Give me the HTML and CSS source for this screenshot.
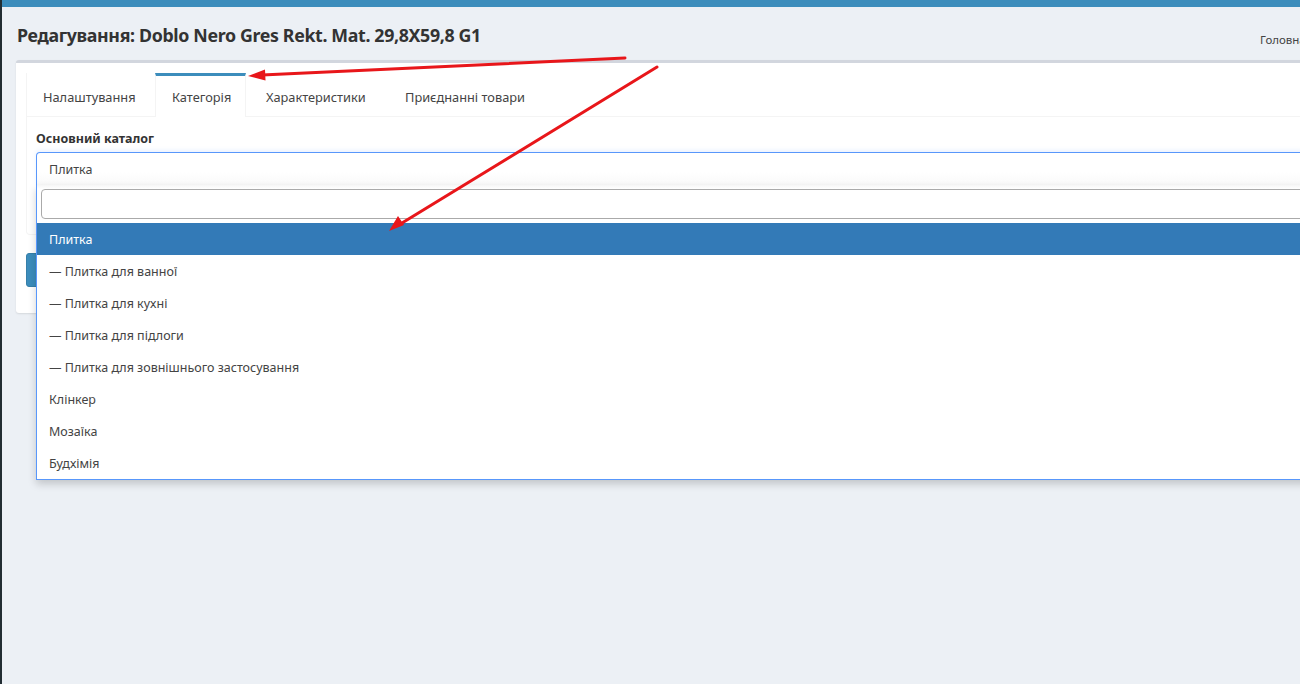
FILE: index.html
```html
<!DOCTYPE html>
<html lang="uk">
<head>
<meta charset="utf-8">
<title>Редагування</title>
<link rel="stylesheet" href="styles.css">
</head>
<body>
<div class="page">
  <div class="topbar"></div>
  <div class="content-wrapper">
    <section class="content-header">
      <h1 class="title">Редагування: Doblo Nero Gres Rekt. Mat. 29,8X59,8 G1</h1>
      <ol class="breadcrumb"><li>Головна</li><li>Товари</li><li>Редагування</li></ol>
    </section>
    <section class="content">
      <div class="box">
        <div class="tabs-custom">
          <ul class="nav-tabs">
            <li class="tab">Налаштування</li>
            <li class="tab active">Категорія</li>
            <li class="tab">Характеристики</li>
            <li class="tab">Приєднанні товари</li>
          </ul>
          <div class="tab-content">
            <label class="form-label">Основний каталог</label>
            <div class="select-wrap">
              <div class="select-box">Плитка</div>
              <div class="dropdown">
                <div class="search-row"><div class="search-input"></div></div>
                <ul class="options">
                  <li class="option highlighted">Плитка</li>
                  <li class="option">— Плитка для ванної</li>
                  <li class="option">— Плитка для кухні</li>
                  <li class="option">— Плитка для підлоги</li>
                  <li class="option">— Плитка для зовнішнього застосування</li>
                  <li class="option">Клінкер</li>
                  <li class="option">Мозаїка</li>
                  <li class="option">Будхімія</li>
                </ul>
              </div>
            </div>
          </div>
        </div>
        <div class="box-footer">
          <button class="btn-primary">Зберегти</button>
        </div>
      </div>
    </section>
  </div>
  <svg class="annotations" width="1300" height="684" viewBox="0 0 1300 684">
    <g stroke="#e8161a" stroke-width="3" stroke-linecap="round" fill="none">
      <line x1="625" y1="58" x2="262" y2="75"/>
      <line x1="657" y1="67" x2="402" y2="223"/>
    </g>
    <g fill="#e8161a">
      <polygon points="248,76 265,69.5 265.5,80.5"/>
      <polygon points="389,231 398,216 404,225"/>
    </g>
  </svg>
</div>
</body>
</html>
```

FILE: styles.css
```css
* { box-sizing: border-box; }
html, body { margin: 0; padding: 0; }
body {
  width: 1300px;
  height: 684px;
  overflow: hidden;
  background: #ecf0f5;
  font-family: "Noto Sans", "Open Sans", sans-serif;
  color: #333;
}
.page {
  position: relative;
  width: 1300px;
  height: 684px;
  border-left: 2px solid #222d32;
  overflow: hidden;
}
.topbar {
  height: 7px;
  background: #3c8dbc;
}
.content-wrapper {
  width: 1500px;
}
.content-header {
  display: flex;
  align-items: flex-start;
  justify-content: space-between;
  padding: 17px 15px 0 15px;
  height: 53px;
}
.title {
  margin: 0;
  font-size: 17.8px;
  font-weight: 700;
  color: #333;
  line-height: 22px;
  letter-spacing: -0.35px;
}
.breadcrumb {
  list-style: none;
  margin: 8px 0 0 0;
  padding: 0;
  width: 227px;
  display: flex;
  font-size: 11.5px;
  color: #444;
  white-space: nowrap;
}
.breadcrumb li + li::before {
  content: ">";
  padding: 0 5px;
  color: #777;
}
.content {
  padding: 0 0 0 14px;
}
.box {
  width: 1400px;
  background: #fff;
  border-top: 3px solid #d2d6de;
  border-radius: 3px;
  box-shadow: 0 1px 2px rgba(0,0,0,0.1);
  padding: 10px 10px 26px 10px;
}
.tabs-custom {
  border: 1px solid #f4f4f4;
  border-top: none;
  border-radius: 0 0 4px 4px;
}
.nav-tabs {
  list-style: none;
  margin: 0;
  padding: 0;
  display: flex;
  border-bottom: 1px solid #f4f4f4;
  height: 44px;
}
.tab {
  font-size: 12.8px;
  color: #444;
  padding: 0 16px;
  border-top: 3px solid transparent;
  line-height: 42px;
  margin-bottom: -1px;
  white-space: nowrap;
}
.tab:first-child { width: 128px; }
.tab.active {
  border-top-color: #3c8dbc;
  border-left: 1px solid #f4f4f4;
  border-right: 1px solid #f4f4f4;
  background: #fff;
  height: 44px;
  width: 91px;
}
.tab:nth-child(3) { width: 140px; padding-left: 20px; }
.tab:nth-child(4) { padding-left: 19px; }
.tab-content {
  padding: 13px 9px 49px 9px;
}
.form-label {
  display: block;
  font-size: 12.5px;
  font-weight: 700;
  color: #333;
  line-height: 18px;
  margin-bottom: 4px;
}
.select-wrap {
  position: relative;
}
.select-box {
  height: 33px;
  border: 1px solid #5897fb;
  border-bottom: none;
  border-radius: 4px 4px 0 0;
  padding: 1px 12px 0;
  font-size: 12.5px;
  line-height: 32px;
  color: #444;
  background: linear-gradient(#fff 60%, #f9f9f9);
  box-shadow: 0 -2px 4px rgba(88,151,251,0.12);
}
.dropdown {
  position: absolute;
  left: 0;
  right: 0;
  top: 33px;
  background: #fff;
  border: 1px solid #5897fb;
  border-top: none;
  box-shadow: 0 4px 8px rgba(0,0,0,0.18);
  z-index: 5;
}
.search-row {
  padding: 4px;
  background: linear-gradient(#f6f6f6, #fff 4px);
}
.search-input {
  height: 30px;
  border: 1px solid #aaa;
  border-radius: 4px;
  background: #fff;
}
.options {
  list-style: none;
  margin: 0;
  padding: 0;
}
.option {
  height: 32px;
  line-height: 32px;
  padding: 1px 12px 0;
  font-size: 12.5px;
  color: #444;
}
.option.highlighted {
  background: #337ab7;
  color: #fff;
}
.box-footer {
  padding-top: 18px;
}
.btn-primary {
  display: block;
  width: 90px;
  height: 34px;
  background: #3c8dbc;
  border: 1px solid #367fa9;
  border-radius: 3px;
  color: #fff;
  font-family: inherit;
  font-size: 13px;
}
.annotations {
  position: absolute;
  left: -2px;
  top: 0;
  pointer-events: none;
  z-index: 10;
}
```
